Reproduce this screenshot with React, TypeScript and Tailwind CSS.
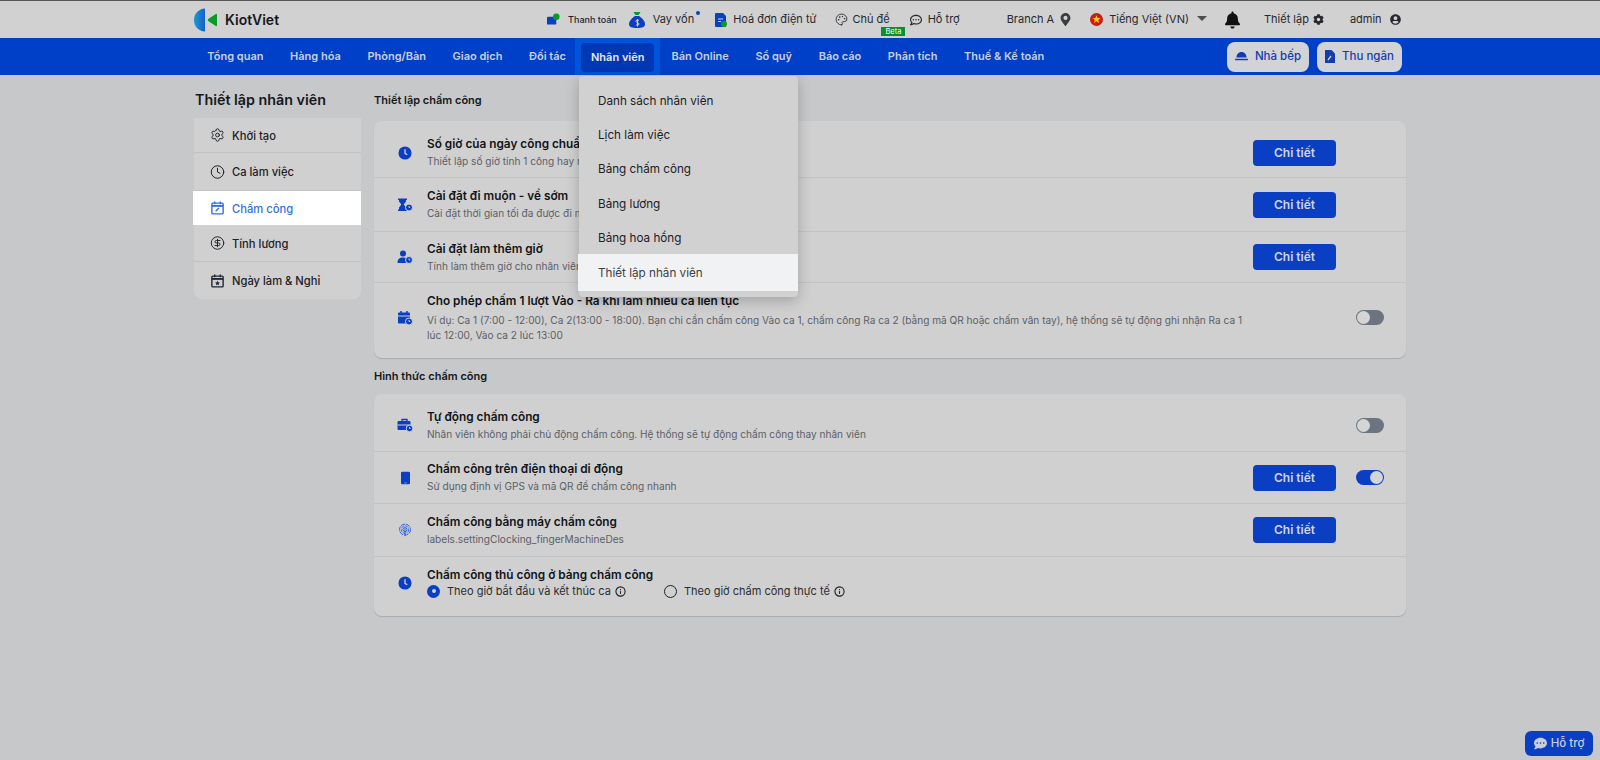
import React from 'react';
import { Settings, Clock, CircleDollarSign, Palette, Info } from 'lucide-react';
import { FaBell, FaCog, FaCommentDots, FaMapMarkerAlt, FaRegCommentDots, FaUserCircle } from 'react-icons/fa';

const navItems = ['Tổng quan', 'Hàng hóa', 'Phòng/Bàn', 'Giao dịch', 'Đối tác', 'Nhân viên', 'Bán Online', 'Sổ quỹ', 'Báo cáo', 'Phân tích', 'Thuế & Kế toán'];
const menuItems = ['Danh sách nhân viên', 'Lịch làm việc', 'Bảng chấm công', 'Bảng lương', 'Bảng hoa hồng', 'Thiết lập nhân viên'];

const ClockFill = () => (
  <svg viewBox="0 0 16 16" className="w-[14px] h-[14px]">
    <circle cx="8" cy="8" r="7.500" fill="#0a3fc4" />
    <path d="M8 3.800v4.600l2.600 1.600" stroke="#d0d0d0" strokeWidth="1.500" fill="none" />
  </svg>
);
const Hourglass = () => (
  <svg viewBox="0 0 16 16" className="w-[16px] h-[16px]">
    <path d="M1 1.500h9v1.500H9v1.500L6.700 7.500 9 10.500V12.500h1V14H1v-1.500h1v-2l2.300-3L2 4.500V3H1z" fill="#0a3fc4" />
    <circle cx="12" cy="10.500" r="3.500" fill="#0a3fc4" stroke="#d0d0d0" />
    <path d="M12 9v1.500h1.200" stroke="#d0d0d0" fill="none" />
  </svg>
);
const UserClock = () => (
  <svg viewBox="0 0 16 16" className="w-[16px] h-[16px]">
    <circle cx="6" cy="4.500" r="3" fill="#0a3fc4" />
    <path d="M0.500 14c0-4 2-5.500 5.500-5.500 1.500 0 2.500.3 3.300.8V14z" fill="#0a3fc4" />
    <circle cx="12" cy="11" r="3.500" fill="#0a3fc4" stroke="#d0d0d0" />
    <path d="M12 9.500V11h1.200" stroke="#d0d0d0" fill="none" />
  </svg>
);
const CalendarClock = () => (
  <svg viewBox="0 0 16 16" className="w-[16px] h-[16px]">
    <path d="M4 1v2M10 1v2" stroke="#0a3fc4" strokeWidth="1.500" />
    <path d="M1 3.500a1 1 0 0 1 1-1h10a1 1 0 0 1 1 1v9a1 1 0 0 1-1 1H2a1 1 0 0 1-1-1z" fill="#0a3fc4" />
    <path d="M1 6h12" stroke="#d0d0d0" />
    <circle cx="12" cy="11.500" r="3.500" fill="#0a3fc4" stroke="#d0d0d0" />
    <path d="M12 10v1.500h1.200" stroke="#d0d0d0" fill="none" />
  </svg>
);
const BagClock = () => (
  <svg viewBox="0 0 16 16" className="w-[16px] h-[16px]">
    <path d="M5 4V2.500h5V4" stroke="#0a3fc4" strokeWidth="1.300" fill="none" />
    <path d="M0.500 5a1 1 0 0 1 1-1h11a1 1 0 0 1 1 1v7a1 1 0 0 1-1 1h-11a1 1 0 0 1-1-1z" fill="#0a3fc4" />
    <path d="M0.500 8h13" stroke="#d0d0d0" />
    <circle cx="12.500" cy="11.500" r="3.300" fill="#0a3fc4" stroke="#d0d0d0" />
    <path d="M12.500 10v1.500h1.200" stroke="#d0d0d0" fill="none" />
  </svg>
);
const Phone = () => (
  <svg viewBox="0 0 10 14" className="w-[9px] h-[14px]">
    <rect width="10" height="14" rx="1.500" fill="#0a3fc4" />
    <rect x="3.500" y="12" width="3" height="1" fill="#7d96dc" />
  </svg>
);
const Fingerprint = () => (
  <svg viewBox="0 0 16 16" className="w-[14px] h-[14px]" fill="none" stroke="#2a62e0" strokeWidth="1.100">
    <circle cx="8" cy="7.500" r="6.300" strokeDasharray="5 1" />
    <circle cx="8" cy="7.500" r="4.300" strokeDasharray="4 1" />
    <circle cx="8" cy="7.500" r="2.300" />
    <path d="M8 6v9" />
  </svg>
);

const CalendarPen = () => (
  <svg viewBox="0 0 16 16" className="w-[16px] h-[16px]" fill="none" stroke="#2f6fe8" strokeWidth="1.500">
    <rect x="2" y="2.800" width="12" height="11.500" rx="1" />
    <path d="M2 5.800h12" strokeWidth="2" />
    <path d="M5 1v3M11 1v3" />
    <path d="M6 11.500l3.500-3.500" strokeWidth="1.600" />
  </svg>
);
const CalendarStar = () => (
  <svg viewBox="0 0 16 16" className="w-[16px] h-[16px]" fill="none" stroke="#1f2937" strokeWidth="1.500">
    <rect x="2" y="2.800" width="12" height="11.500" rx="1" />
    <path d="M2 5.800h12" strokeWidth="2" />
    <path d="M5 1v3M11 1v3" />
    <path d="M8 7.800l.8 1.600 1.700.2-1.200 1.200.3 1.700L8 11.700l-1.600.8.300-1.700-1.200-1.200 1.700-.2z" fill="#1f2937" stroke="none" />
  </svg>
);

const Logo = () => (
  <svg viewBox="0 0 24 24" className="w-[24px] h-[24px]">
    <defs>
      <linearGradient id="logo-blue" x1="0" x2="1" y1="0" y2="0">
        <stop offset="0" stopColor="#1a9ad2" />
        <stop offset="1" stopColor="#1560c8" />
      </linearGradient>
    </defs>
    <path d="M10 0.500C4 1.500 0 6 0 12s4 10.500 10 11.500c.7 0 1-.4 1-1V1.500c0-.6-.3-1-1-1z" fill="url(#logo-blue)" />
    <path d="M23 6.500v11c0 .7-.6 1-1.200.6l-7.300-4.800c-1-.7-1-1.900 0-2.600l7.300-4.800c.6-.4 1.200-.1 1.200.6z" fill="#0a9a28" />
  </svg>
);

const Toggle = ({ on }: { on?: boolean }) => (
  <div className={on
    ? 'w-[28px] h-[15px] rounded-full bg-[#0a3fc4] flex items-center justify-end pr-[1px]'
    : 'w-[28px] h-[15px] rounded-full bg-[#6c757f] flex items-center pl-[1px]'}>
    <div className="w-[13px] h-[13px] rounded-full bg-[#d5d5d5]" />
  </div>
);

const DetailButton = () => (
  <button className="w-[83px] h-[26px] rounded-[4px] bg-[#0a3fc4] text-[#d0d4e0] text-[12px] font-semibold">Chi tiết</button>
);

interface RowProps {
  icon: React.ReactNode;
  title: string;
  desc?: string;
  detail?: boolean;
  toggle?: 'on' | 'off';
  height: string;
  descGap?: string;
  children?: React.ReactNode;
}

const Row = ({ icon, title, desc, detail, toggle, height, descGap = 'mt-[2px]', children }: RowProps) => (
  <div className={`flex items-center border-b border-[#c2c3c6] last:border-b-0 pl-[23px] pr-[22px] ${height}`}>
    <div className="w-[16px] flex justify-center shrink-0">{icon}</div>
    <div className="ml-[14px] w-[826px] shrink-0">
      <div className="text-[11.800px] leading-[16px] font-semibold text-[#111418]">{title}</div>
      {desc && <div className={`text-[10.100px] leading-[15px] ${descGap} text-[#5c6068]`}>{desc}</div>}
      {children}
    </div>
    <div className="ml-auto flex items-center">
      {detail && <DetailButton />}
      <div className="w-[28px] ml-[20px]">{toggle && <Toggle on={toggle === 'on'} />}</div>
    </div>
  </div>
);

const Radio = ({ checked, label }: { checked?: boolean; label: string }) => (
  <div className="flex items-center text-[11px] leading-[14px] text-[#2a2d33]">
    {checked
      ? <span className="w-[13px] h-[13px] rounded-full bg-[#0a3fc4] flex items-center justify-center"><span className="w-[4px] h-[4px] rounded-full bg-[#d0d0d0]" /></span>
      : <span className="w-[13px] h-[13px] rounded-full border-[1.500px] border-[#1c1f24]" />}
    <span className="ml-[7px]">{label}</span>
    <Info className="ml-[4px] w-[11px] h-[11px] text-[#1c1f24]" strokeWidth={2.400} />
  </div>
);

const SideItem = ({ icon, label, active, height }: { icon: React.ReactNode; label: string; active?: boolean; height: string }) => (
  <div className={active
    ? `flex items-center pl-[17px] -ml-[1px] bg-white text-[#2f6fe8] ${height}`
    : `flex items-center pl-[16px] border-b border-[#c2c3c6] text-[#1d2026] ${height}`}>
    <span className="w-[15px] flex justify-center">{icon}</span>
    <span className="ml-[7px] pt-[2px] text-[11.200px] font-medium">{label}</span>
  </div>
);

export default function App() {
  return (
    <div className="w-[1600px] h-[760px] overflow-hidden relative bg-[#c7c8ca] font-[Inter,sans-serif]">
      {/* top bar */}
      <div className="h-[38px] bg-[#d1d1d1] border-t border-[#555] flex items-center pl-[194px] text-[#26282d] text-[11px]">
        <Logo />
        <span className="ml-[7px] text-[14px] font-semibold text-[#15181c]">KiotViet</span>
        <svg viewBox="0 0 14 14" className="ml-[268px] w-[13px] h-[13px]">
          <rect y="4" width="10" height="8.500" rx="1" fill="#0a3fc4" />
          <circle cx="10" cy="4" r="3.500" fill="#0a9a28" />
        </svg>
        <span className="ml-[8px] text-[9px] font-medium text-[#1b1e33]">Thanh toán</span>
        <svg viewBox="0 0 16 18" className="ml-[12px] w-[16px] h-[18px]">
          <path d="M4.500 1h7l-1.800 3H6.300z" fill="#0a9a28" />
          <path d="M6 5h4c3 2 6 5 6 8 0 3-2.500 4-8 4s-8-1-8-4c0-3 3-6 6-8z" fill="#0a3fc4" />
          <path d="M10 9.500C9 8.500 6.500 9 7 10.500s3 1 3 2.500-2.500 1.500-3 .5M8.500 8v7.500" stroke="#d1d1d1" fill="none" />
        </svg>
        <span className="ml-[8px] relative">
          Vay vốn
          <span className="absolute -right-[6px] top-0 w-[4px] h-[4px] rounded-full bg-[#0a3fc4]" />
        </span>
        <svg viewBox="0 0 12 14" className="ml-[21px] w-[12px] h-[14px]">
          <path d="M1 0h7l3 3v10a1 1 0 0 1-1 1H1a1 1 0 0 1-1-1V1a1 1 0 0 1 1-1z" fill="#0a3fc4" />
          <path d="M3 6h5M3 8.500h3" stroke="#d1d1d1" />
          <circle cx="9" cy="11" r="3" fill="#0a9a28" />
        </svg>
        <span className="ml-[6px]">Hoá đơn điện tử</span>
        <Palette className="ml-[19px] w-[13px] h-[13px]" strokeWidth={1.600} />
        <span className="ml-[4px] relative">
          Chủ đề
          <span className="absolute left-[29px] top-[16px] w-[24px] h-[9px] bg-[#0a8f2a] text-white text-[7.500px] leading-[9px] text-center">Beta</span>
        </span>
        <FaRegCommentDots className="ml-[20px] w-[12px] h-[12px]" />
        <span className="ml-[6px]">Hỗ trợ</span>
        <span className="ml-[47px]">Branch A</span>
        <FaMapMarkerAlt className="ml-[6px] w-[11px] h-[13px] text-[#3a3d42]" />
        <svg viewBox="0 0 14 14" className="ml-[19px] w-[13px] h-[13px]">
          <circle cx="7" cy="7" r="7" fill="#d01818" />
          <path d="M7 2.500l1.200 3h3.100l-2.500 2 1 3.200L7 8.800l-2.800 1.900 1-3.200-2.500-2h3.100z" fill="#f6d010" />
        </svg>
        <span className="ml-[6px]">Tiếng Việt (VN)</span>
        <span className="ml-[8px] -mt-[3px] w-0 h-0 border-x-[5px] border-x-transparent border-t-[5px] border-t-[#4a4d52]" />
        <FaBell className="ml-[18px] w-[15px] h-[18px] text-[#111]" />
        <span className="ml-[24px]">Thiết lập</span>
        <FaCog className="ml-[4px] w-[11px] h-[11px]" />
        <span className="ml-[26px]">admin</span>
        <FaUserCircle className="ml-[8px] w-[11px] h-[11px]" />
      </div>

      {/* nav */}
      <div className="h-[37px] bg-[#0040c8] flex items-center pl-[194px] relative">
        {navItems.map(item =>
          item === 'Nhân viên' ? (
            <div key={item} className="h-[37px] w-[85px] -ml-[4px] -mr-[2px] bg-[#0054dc] pt-[5px] pb-[3px] px-[6px] flex">
              <div className="w-full rounded-[4px] bg-[#0038b4] flex items-center justify-center text-[11px] font-semibold text-[#e6e8ee]">{item}</div>
            </div>
          ) : (
            <span key={item} className="px-[13.300px] text-[11px] font-semibold text-[#c9cedb]">{item}</span>
          )
        )}
        <button className="ml-auto w-[82px] h-[30px] rounded-[8px] bg-[#d2d3d6] flex items-center justify-center text-[11.500px] font-medium text-[#123cb0]">
          <svg viewBox="0 0 14 12" className="w-[13px] h-[11px] mr-[7px]">
            <path d="M7 1c-3.500 0-5.500 3-5.500 6h11C12.500 4 10.500 1 7 1zM0 8.500h14V10H0z" fill="#123cb0" />
          </svg>
          Nhà bếp
        </button>
        <button className="ml-[8px] mr-[198px] w-[85px] h-[30px] rounded-[8px] bg-[#d2d3d6] flex items-center justify-center text-[11.500px] font-medium text-[#123cb0]">
          <svg viewBox="0 0 10 13" className="w-[10px] h-[13px] mr-[7px]">
            <path d="M0 0h6.500L10 3.500V13H0z" fill="#123cb0" />
            <path d="M3 10l3-4" stroke="#d2d3d6" strokeWidth="1.300" />
          </svg>
          Thu ngân
        </button>
      </div>

      {/* dropdown */}
      <div className="absolute left-[579px] top-[76px] w-[219px] h-[221px] z-10 bg-[#d1d1d1] rounded-[4px] shadow-[0_4px_14px_rgba(0,0,0,0.22)] flex flex-col pt-[7.500px]">
        {menuItems.map(item => (
          <div key={item} className={item === 'Thiết lập nhân viên'
            ? 'h-[37px] -ml-[1px] pl-[20px] pt-[3px] flex items-center text-[11.700px] text-[#3e4046] bg-[#f1f2f4]'
            : 'h-[34.100px] pl-[19px] pt-[3px] flex items-center text-[11.700px] text-[#1d2026]'}>
            {item}
          </div>
        ))}
      </div>

      {/* content */}
      <div className="flex pl-[194px]">
        <div className="w-[167px] shrink-0">
          <h2 className="mt-[15px] ml-[1px] text-[14.300px] leading-[20px] font-semibold text-[#15181c]">Thiết lập nhân viên</h2>
          <div className="mt-[8px] bg-[#d0d0d0] rounded-b-[8px]">
            <SideItem icon={<Settings className="w-[16px] h-[16px]" strokeWidth={1.500} />} label="Khởi tạo" height="h-[35px]" />
            <SideItem icon={<Clock className="w-[16px] h-[16px]" strokeWidth={1.600} />} label="Ca làm việc" height="h-[38px]" />
            <SideItem icon={<CalendarPen />} label="Chấm công" active height="h-[34px]" />
            <SideItem icon={<CircleDollarSign className="w-[16px] h-[16px]" strokeWidth={1.500} />} label="Tính lương" height="h-[37px]" />
            <div className="flex items-center pl-[16px] h-[37px] text-[#1d2026]">
              <span className="w-[15px] flex justify-center"><CalendarStar /></span>
              <span className="ml-[7px] pt-[2px] text-[11.200px] font-medium">Ngày làm & Nghỉ</span>
            </div>
          </div>
        </div>

        <div className="ml-[13px] w-[1032px] shrink-0">
          <h3 className="mt-[17px] text-[11px] leading-[16px] font-semibold text-[#15181c]">Thiết lập chấm công</h3>
          <div className="mt-[13px] bg-[#d0d0d0] rounded-[8px] shadow-[0_1px_1px_rgba(0,0,0,0.15)]">
            <Row icon={<ClockFill />} title="Số giờ của ngày công chuẩn" desc="Thiết lập số giờ tính 1 công hay nửa công theo từng ca làm việc của nhân viên" detail height="h-[57px] pt-[7px]" />
            <Row icon={<Hourglass />} title="Cài đặt đi muộn - về sớm" desc="Cài đặt thời gian tối đa được đi muộn - về sớm" detail height="h-[54px]" />
            <Row icon={<UserClock />} title="Cài đặt làm thêm giờ" desc="Tính làm thêm giờ cho nhân viên" detail height="h-[51px]" />
            <Row icon={<CalendarClock />} title="Cho phép chấm 1 lượt Vào - Ra khi làm nhiều ca liên tục" desc="Ví dụ: Ca 1 (7:00 - 12:00), Ca 2(13:00 - 18:00). Bạn chỉ cần chấm công Vào ca 1, chấm công Ra ca 2 (bằng mã QR hoặc chấm vân tay), hệ thống sẽ tự động ghi nhận Ra ca 1 lúc 12:00, Vào ca 2 lúc 13:00" toggle="off" descGap="mt-[4px]" height="h-[75px] pb-[6px]" />
          </div>

          <h3 className="mt-[10px] text-[11px] leading-[16px] font-semibold text-[#15181c]">Hình thức chấm công</h3>
          <div className="mt-[10px] bg-[#d0d0d0] rounded-[8px] shadow-[0_1px_1px_rgba(0,0,0,0.15)]">
            <Row icon={<BagClock />} title="Tự động chấm công" desc="Nhân viên không phải chủ động chấm công. Hệ thống sẽ tự động chấm công thay nhân viên" toggle="off" height="h-[58px] pt-[5px]" />
            <Row icon={<Phone />} title="Chấm công trên điện thoại di động" desc="Sử dụng định vị GPS và mã QR để chấm công nhanh" detail toggle="on" height="h-[52px]" />
            <Row icon={<Fingerprint />} title="Chấm công bằng máy chấm công" desc="labels.settingClocking_fingerMachineDes" detail height="h-[53px]" />
            <Row icon={<ClockFill />} title="Chấm công thủ công ở bảng chấm công" height="h-[59px] pb-[8px]">
              <div className="flex mt-[1px]">
                <div className="w-[237px]"><Radio checked label="Theo giờ bắt đầu và kết thúc ca" /></div>
                <Radio label="Theo giờ chấm công thực tế" />
              </div>
            </Row>
          </div>
        </div>
      </div>

      {/* floating help */}
      <button className="absolute right-[7px] bottom-[4px] w-[68px] h-[25px] rounded-[6px] bg-[#0a3fc4] flex items-center justify-center text-[11.500px] font-medium text-[#c9cedb]">
        <FaCommentDots className="w-[13px] h-[13px] mr-[4px]" />
        Hỗ trợ
      </button>
    </div>
  );
}
